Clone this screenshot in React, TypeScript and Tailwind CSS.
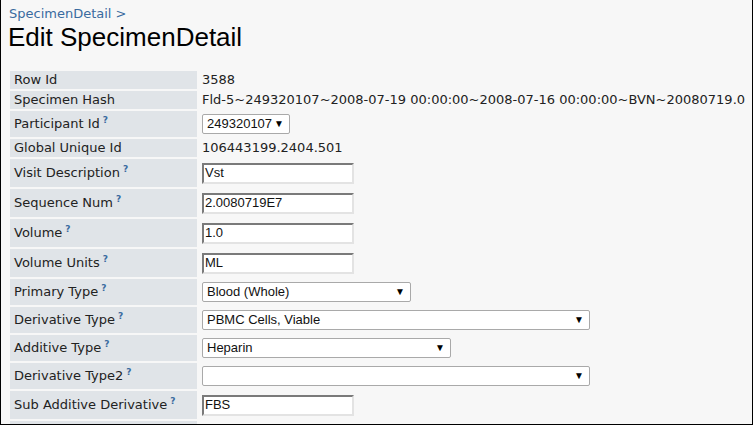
import React from "react";

type Row = {
  label: string;
  help?: boolean;
  kind: "text" | "input" | "select";
  value: string;
  width?: number;
};

const rows: Row[] = [
  { label: "Row Id", kind: "text", value: "3588" },
  {
    label: "Specimen Hash",
    kind: "text",
    value: "Fld-5~249320107~2008-07-19 00:00:00~2008-07-16 00:00:00~BVN~20080719.0",
  },
  { label: "Participant Id", help: true, kind: "select", value: "249320107", width: 88 },
  { label: "Global Unique Id", kind: "text", value: "106443199.2404.501" },
  { label: "Visit Description", help: true, kind: "input", value: "Vst" },
  { label: "Sequence Num", help: true, kind: "input", value: "2.0080719E7" },
  { label: "Volume", help: true, kind: "input", value: "1.0" },
  { label: "Volume Units", help: true, kind: "input", value: "ML" },
  { label: "Primary Type", help: true, kind: "select", value: "Blood (Whole)", width: 209 },
  { label: "Derivative Type", help: true, kind: "select", value: "PBMC Cells, Viable", width: 388 },
  { label: "Additive Type", help: true, kind: "select", value: "Heparin", width: 249 },
  { label: "Derivative Type2", help: true, kind: "select", value: "", width: 388 },
  { label: "Sub Additive Derivative", help: true, kind: "input", value: "FBS" },
  { label: "", kind: "input", value: "" },
];

function FakeSelect({ value, width }: { value: string; width: number }) {
  return (
    <div
      className="h-[20px] flex items-center justify-between bg-white border border-[#a9a9a9] rounded-[2px] pl-[4px] pr-[5px] text-[13px] text-[#111] font-['Liberation_Sans',Arial,sans-serif]"
      style={{ width }}
    >
      <span className="whitespace-nowrap">{value}</span>
      <span className="text-[10px] leading-none text-black">▼</span>
    </div>
  );
}

function FakeInput({ value }: { value: string }) {
  return (
    <div className="w-[152px] h-[21px] flex items-center bg-white border-2 border-t-[#7a7a7a] border-l-[#7a7a7a] border-r-[#e3e3e3] border-b-[#e3e3e3] pl-[1px] text-[13px] text-[#111] font-['Liberation_Sans',Arial,sans-serif]">
      {value}
    </div>
  );
}

export default function App() {
  return (
    <div className="w-[753px] h-[425px] overflow-hidden bg-[#f7f7f7] border-l border-r border-b border-black font-['DejaVu_Sans',Verdana,sans-serif] text-[13px] text-[#222]">
      <div className="pl-[8px] pt-[5px] text-[13px] leading-[18px] text-[#3a6b9f]">SpecimenDetail &gt;</div>
      <h1 className="pl-[7px] text-[26px] leading-[28px] text-black font-['Liberation_Sans',Arial,sans-serif]">
        Edit SpecimenDetail
      </h1>
      <div className="mt-[20px] ml-[9px] flex flex-col gap-[2px]">
        {rows.map((r, i) => {
          const h = r.kind === "text" ? "h-[18px]" : r.kind === "select" ? "h-[26px]" : "h-[28px]";
          return (
            <div key={i} className={`flex ${h}`}>
              <div className="w-[187px] shrink-0 bg-[#e0e4e8] flex items-center pl-[4px] whitespace-nowrap">
                {r.label}
                {r.help && (
                  <sup className="ml-[3px] -top-[4px] text-[9px] font-bold text-[#3a6b9f]">?</sup>
                )}
              </div>
              <div className="flex items-center pl-[5px] whitespace-nowrap">
                {r.kind === "text" && <span>{r.value}</span>}
                {r.kind === "select" && <FakeSelect value={r.value} width={r.width ?? 100} />}
                {r.kind === "input" && <FakeInput value={r.value} />}
              </div>
            </div>
          );
        })}
      </div>
    </div>
  );
}
